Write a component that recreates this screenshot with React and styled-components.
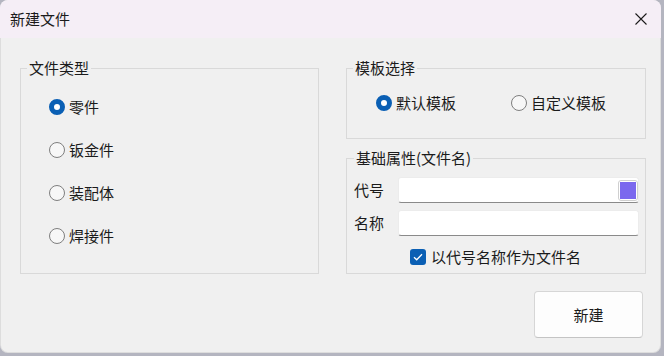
import styled, { createGlobalStyle } from "styled-components";

const Global = createGlobalStyle`
  html, body {
    margin: 0;
    padding: 0;
    background: #b4b5c0;
  }
  body {
    font-family: "Noto Sans CJK SC", "Noto Sans", sans-serif;
    color: #1b1b1b;
  }
`;

const Window = styled.div`
  width: 661px;
  height: 353px;
  background: #f0f0f0;
  border-radius: 8px;
  overflow: hidden;
  display: flex;
  flex-direction: column;
  box-shadow: inset 0 0 0 1px rgba(0, 0, 0, 0.08);
`;

const TitleBar = styled.div`
  height: 38px;
  flex-shrink: 0;
  background: #f5eef6;
  display: flex;
  align-items: center;
  justify-content: space-between;
  padding-left: 10px;
`;

const Title = styled.span`
  font-size: 15px;
  line-height: 20px;
`;

const Close = styled.div`
  width: 46px;
  height: 38px;
  margin-right: -3px;
  display: flex;
  align-items: center;
  justify-content: center;
`;

const Body = styled.div`
  padding: 20px 15px 0 20px;
  display: flex;
  flex-direction: column;
`;

const Columns = styled.div`
  display: grid;
  grid-template-columns: 299px 300px;
  column-gap: 27px;
`;

const RightColumn = styled.div`
  display: flex;
  flex-direction: column;
  gap: 9px;
`;

const Group = styled.fieldset`
  margin: 0;
  box-sizing: border-box;
  height: ${(p) => p.$h}px;
  border: 1px solid #d9d9d9;
  padding: ${(p) => p.$pad};
  min-width: 0;
`;

const Legend = styled.legend`
  font-size: 15px;
  line-height: 20px;
  padding: 0 2px;
`;

const RadioList = styled.div`
  display: flex;
  flex-direction: ${(p) => (p.$row ? "row" : "column")};
  gap: ${(p) => p.$gap}px;
  margin-left: ${(p) => p.$indent}px;
`;

const Option = styled.label`
  display: flex;
  align-items: center;
  gap: 4px;
  height: 22px;
  font-size: 15px;
  line-height: 22px;
`;

const Dot = styled.span`
  width: 16px;
  height: 16px;
  box-sizing: border-box;
  border-radius: 50%;
  flex-shrink: 0;
  ${(p) =>
    p.$on
      ? `background: #fff; border: 5px solid #0a5fb4;`
      : `background: #f7f7f7; border: 1px solid #7f7f7f;`}
`;

const Field = styled.div`
  display: flex;
  align-items: center;
  height: 26px;
  margin-top: ${(p) => p.$mt || 0}px;
`;

const FieldLabel = styled.span`
  width: 44px;
  font-size: 15px;
  line-height: 22px;
`;

const InputBox = styled.div`
  flex: 1;
  height: 26px;
  box-sizing: border-box;
  display: flex;
  align-items: center;
  background: #fff;
  border: 1px solid #ececec;
  border-bottom: 1px solid #8a8a8a;
  border-radius: 3px;
`;

const Input = styled.input`
  flex: 1;
  min-width: 0;
  border: 0;
  outline: none;
  background: transparent;
  font: inherit;
  font-size: 15px;
  padding: 0 6px;
`;

const Swatch = styled.span`
  width: 20px;
  height: 21px;
  box-sizing: border-box;
  border: 1px solid #cfcfcf;
  border-radius: 3px;
  padding: 1px;
  background: #fff;
  display: flex;
`;

const SwatchFill = styled.span`
  flex: 1;
  background: #7b68ee;
`;

const CheckRow = styled.label`
  display: flex;
  align-items: center;
  gap: 5px;
  height: 22px;
  margin: 10px 0 0 56px;
  font-size: 15px;
  line-height: 22px;
`;

const CheckBox = styled.span`
  width: 16px;
  height: 16px;
  border-radius: 3px;
  background: #0a5fb4;
  display: flex;
  align-items: center;
  justify-content: center;
`;

const Footer = styled.div`
  display: flex;
  justify-content: flex-end;
  padding-right: 3px;
  margin-top: 17px;
`;

const Button = styled.button`
  width: 109px;
  height: 47px;
  box-sizing: border-box;
  background: #fdfdfd;
  border: 1px solid #d6d6d6;
  border-bottom-color: #c4c4c4;
  border-radius: 4px;
  font: inherit;
  font-size: 15px;
  color: #1b1b1b;
`;

function Radio({ on, children }) {
  return (
    <Option>
      <Dot $on={on} />
      {children}
    </Option>
  );
}

export default function App() {
  return (
    <>
      <Global />
      <Window>
        <TitleBar>
          <Title>新建文件</Title>
          <Close>
            <svg width="12" height="12" viewBox="0 0 12 12">
              <path d="M0.5 0.5 L11.5 11.5 M11.5 0.5 L0.5 11.5" stroke="#1b1b1b" strokeWidth="1.1" />
            </svg>
          </Close>
        </TitleBar>
        <Body>
          <Columns>
            <Group $h={216} $pad="18px 6px 0 6px">
              <Legend>文件类型</Legend>
              <RadioList $gap={21} $indent={22}>
                <Radio on>零件</Radio>
                <Radio>钣金件</Radio>
                <Radio>装配体</Radio>
                <Radio>焊接件</Radio>
              </RadioList>
            </Group>
            <RightColumn>
              <Group $h={81} $pad="14px 6px 0 6px">
                <Legend>模板选择</Legend>
                <RadioList $row $gap={55} $indent={23}>
                  <Radio on>默认模板</Radio>
                  <Radio>自定义模板</Radio>
                </RadioList>
              </Group>
              <Group $h={126} $pad="9px 6px 0 7px">
                <Legend>基础属性(文件名)</Legend>
                <Field>
                  <FieldLabel>代号</FieldLabel>
                  <InputBox>
                    <Input />
                    <Swatch>
                      <SwatchFill />
                    </Swatch>
                  </InputBox>
                </Field>
                <Field $mt={7}>
                  <FieldLabel>名称</FieldLabel>
                  <InputBox>
                    <Input />
                  </InputBox>
                </Field>
                <CheckRow>
                  <CheckBox>
                    <svg width="10" height="8" viewBox="0 0 10 8">
                      <path d="M1 4.2 L3.7 6.8 L9 1.2" fill="none" stroke="#fff" strokeWidth="1.3" />
                    </svg>
                  </CheckBox>
                  以代号名称作为文件名
                </CheckRow>
              </Group>
            </RightColumn>
          </Columns>
          <Footer>
            <Button>新建</Button>
          </Footer>
        </Body>
      </Window>
    </>
  );
}
